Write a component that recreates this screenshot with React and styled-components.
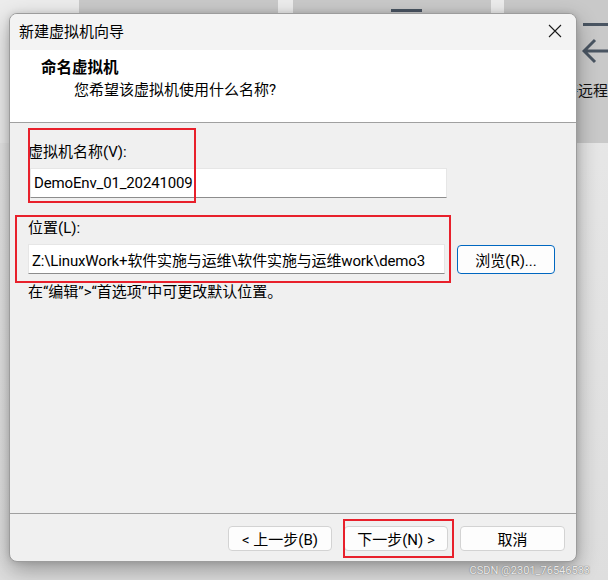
import React from "react";
import styled, { createGlobalStyle } from "styled-components";

const GlobalStyle = createGlobalStyle`
  html, body {
    margin: 0;
    padding: 0;
    background: #e4e4e4;
  }
  body {
    font-family: Roboto, "Noto Sans CJK SC", sans-serif;
    color: #000;
  }
`;

const Screen = styled.div`
  position: relative;
  width: 608px;
  height: 580px;
  overflow: hidden;
  background: linear-gradient(#e9e9e9, #dedede);
`;

// the dimmed desktop behind the modal
const Backdrop = styled.div`
  display: flex;
  align-items: flex-start;
  height: 143px;
  background: #ececec;
`;

const Tile = styled.div`
  flex: 0 0 ${p => p.$w}px;
  height: 143px;
  margin-left: ${p => p.$gap || 0}px;
  background: #c9c9c9;
  overflow: hidden;
`;

const IconBar = styled.div`
  margin: ${p => p.$top}px 0 0 ${p => p.$left}px;
  width: ${p => p.$w}px;
  height: ${p => p.$h}px;
  background: #4a5562;
`;

const SideTools = styled.div`
  display: flex;
  flex-direction: column;
`;

const ArrowIcon = styled.svg`
  display: block;
  margin: 12px 0 0 78px;
`;

const SideLabel = styled.div`
  margin: 17px 0 0 59px;
  white-space: nowrap;
  font-size: 15px;
  line-height: 20px;
  color: #111;
`;

const Dialog = styled.div`
  position: absolute;
  left: 9px;
  top: 13px;
  width: 568px;
  height: 549px;
  box-sizing: border-box;
  display: flex;
  flex-direction: column;
  background: #f0f0f0;
  border: 1px solid #9c9c9c;
  border-radius: 8px;
  overflow: hidden;
  box-shadow: 0 8px 22px rgba(0, 0, 0, 0.32), 0 0 6px rgba(0, 0, 0, 0.12);
`;

const TitleBar = styled.div`
  flex: 0 0 36px;
  display: flex;
  align-items: center;
  justify-content: space-between;
  padding: 0 14px 3px 9px;
  box-sizing: border-box;
  background: #f3f3f3;
  font-size: 15px;
`;

const CloseButton = styled.svg`
  display: block;
`;

const Header = styled.div`
  flex: 0 0 73px;
  padding: 8px 0 0 31px;
  box-sizing: border-box;
  background: #fff;
  border-bottom: 1px solid #a0a0a0;
`;

const HeaderTitle = styled.div`
  font-size: 15.5px;
  line-height: 20px;
  font-weight: 700;
`;

const HeaderSub = styled.div`
  margin: 2px 0 0 33px;
  font-size: 15px;
  line-height: 20px;
`;

const Body = styled.div`
  flex: 1;
  padding: 19px 0 0 18px;
`;

const Label = styled.div`
  font-size: 15px;
  line-height: 20px;
  margin-top: ${p => p.$top || 0}px;
`;

const FieldRow = styled.div`
  display: flex;
  align-items: center;
  gap: 12px;
  margin-top: 6px;
`;

const TextBox = styled.div`
  box-sizing: border-box;
  width: 417px;
  height: 30px;
  margin-left: ${p => p.$indent || 0}px;
  padding-left: 3px;
  display: flex;
  align-items: center;
  background: #fff;
  border: 1px solid #e6e6e6;
  border-bottom-color: #8d8d8d;
  font-size: 15px;
  letter-spacing: -0.15px;
  white-space: nowrap;
  overflow: hidden;
`;

const Button = styled.div`
  box-sizing: border-box;
  width: ${p => p.$w}px;
  height: ${p => p.$h || 25}px;
  display: flex;
  align-items: center;
  justify-content: center;
  background: #fdfdfd;
  border: 1px solid ${p => (p.$primary ? "#0067c0" : "#d3d3d3")};
  border-radius: 4px;
  font-size: 15px;
  white-space: nowrap;
`;

const Hint = styled.div`
  margin-top: 8px;
  font-size: 15px;
  line-height: 20px;
`;

const Footer = styled.div`
  flex: 0 0 35px;
  display: flex;
  justify-content: flex-end;
  gap: 12px;
  padding: 12px 11px 0 0;
  border-top: 1px solid #a0a0a0;
`;

// red annotation boxes drawn over the dialog
const Mark = styled.div`
  position: absolute;
  left: ${p => p.$x}px;
  top: ${p => p.$y}px;
  width: ${p => p.$w}px;
  height: ${p => p.$h}px;
  box-sizing: border-box;
  border: 2px solid #e8202b;
  pointer-events: none;
`;

const Watermark = styled.div`
  position: absolute;
  right: 18px;
  bottom: 2px;
  font-size: 11px;
  line-height: 14px;
  color: rgba(255, 255, 255, 0.85);
  text-shadow: 0 0 1px #7a7a7a, 0 0 1px #7a7a7a;
`;

export default function App() {
  return (
    <Screen>
      <GlobalStyle />
      <Backdrop>
        <Tile $w={199} style={{ marginLeft: 79 }} />
        <Tile $w={198} $gap={15}>
          <IconBar $top={9} $left={98} $w={31} $h={3} />
        </Tile>
        <Tile $w={104} $gap={13}>
          <SideTools>
            <IconBar $top={23} $left={79} $w={25} $h={3} />
            <ArrowIcon width="26" height="26" viewBox="0 0 26 26">
              <path
                d="M2 13 H26 M13 2 L2 13 L13 24"
                fill="none"
                stroke="#4a5562"
                strokeWidth="3"
              />
            </ArrowIcon>
            <SideLabel>接远程</SideLabel>
          </SideTools>
        </Tile>
      </Backdrop>

      <Dialog>
        <TitleBar>
          <span>新建虚拟机向导</span>
          <CloseButton width="14" height="14" viewBox="0 0 14 14">
            <path d="M1 1 L13 13 M13 1 L1 13" stroke="#1b1b1b" strokeWidth="1.1" />
          </CloseButton>
        </TitleBar>

        <Header>
          <HeaderTitle>命名虚拟机</HeaderTitle>
          <HeaderSub>您希望该虚拟机使用什么名称?</HeaderSub>
        </Header>

        <Body>
          <Label>虚拟机名称(V):</Label>
          <FieldRow>
            <TextBox $indent={2}>DemoEnv_01_20241009</TextBox>
          </FieldRow>

          <Label $top={20}>位置(L):</Label>
          <FieldRow>
            <TextBox>Z:\LinuxWork+软件实施与运维\软件实施与运维work\demo3</TextBox>
            <Button $w={98} $h={29} $primary>浏览(R)...</Button>
          </FieldRow>

          <Hint>在“编辑”&gt;“首选项”中可更改默认位置。</Hint>
        </Body>

        <Footer>
          <Button $w={104}>&lt; 上一步(B)</Button>
          <Button $w={104}>下一步(N) &gt;</Button>
          <Button $w={105}>取消</Button>
        </Footer>

        <Mark $x={18} $y={114} $w={168} $h={75} />
        <Mark $x={5} $y={201} $w={436} $h={68} />
        <Mark $x={333} $y={505} $w={111} $h={39} />
      </Dialog>

      <Watermark>CSDN @2301_76546533</Watermark>
    </Screen>
  );
}
